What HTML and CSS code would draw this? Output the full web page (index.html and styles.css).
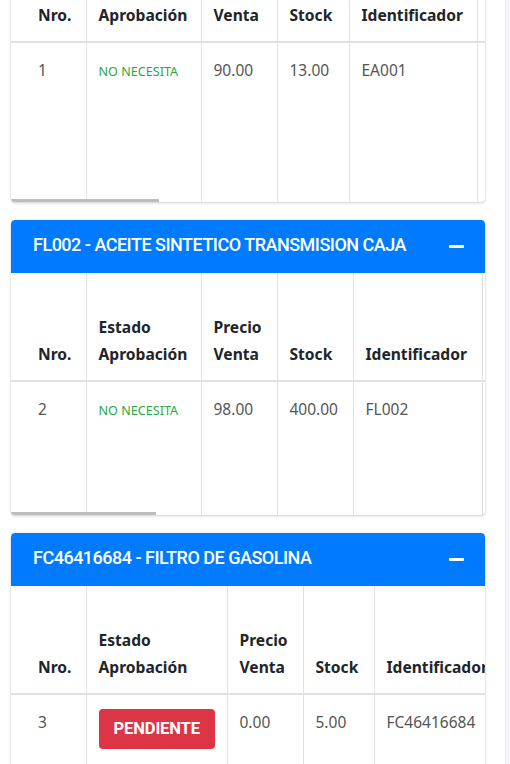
FILE: index.html
```html
<!DOCTYPE html>
<html lang="es">
<head>
<meta charset="utf-8">
<title>Productos</title>
<link rel="stylesheet" href="styles.css">
</head>
<body>
<div class="page">
  <div class="content">

    <section class="card">
      <header class="card-header">
        <h3 class="card-title">EA001 - PRODUCTO</h3>
        <span class="collapse-btn"></span>
      </header>
      <div class="table-wrap">
        <table class="grid g1">
          <thead>
            <tr>
              <th class="c-nro">Nro.</th>
              <th class="c-est">Estado Aprobación</th>
              <th class="c-pre">Precio Venta</th>
              <th class="c-stk">Stock</th>
              <th class="c-id">Identificador</th>
              <th class="c-more"></th>
            </tr>
          </thead>
          <tbody>
            <tr class="r1">
              <td class="c-nro">1</td>
              <td><span class="ok">NO NECESITA</span></td>
              <td>90.00</td>
              <td>13.00</td>
              <td>EA001</td>
              <td></td>
            </tr>
          </tbody>
        </table>
        <div class="scroll"><div class="thumb t1"></div></div>
      </div>
    </section>

    <section class="card">
      <header class="card-header">
        <h3 class="card-title">FL002 - ACEITE SINTETICO TRANSMISION CAJA</h3>
        <span class="collapse-btn"></span>
      </header>
      <div class="table-wrap">
        <table class="grid g2">
          <thead>
            <tr>
              <th class="c-nro">Nro.</th>
              <th class="c-est">Estado Aprobación</th>
              <th class="c-pre">Precio Venta</th>
              <th class="c-stk">Stock</th>
              <th class="c-id">Identificador</th>
              <th class="c-more"></th>
            </tr>
          </thead>
          <tbody>
            <tr class="r2">
              <td class="c-nro">2</td>
              <td><span class="ok">NO NECESITA</span></td>
              <td>98.00</td>
              <td>400.00</td>
              <td>FL002</td>
              <td></td>
            </tr>
          </tbody>
        </table>
        <div class="scroll"><div class="thumb t2"></div></div>
      </div>
    </section>

    <section class="card">
      <header class="card-header">
        <h3 class="card-title">FC46416684 - FILTRO DE GASOLINA</h3>
        <span class="collapse-btn"></span>
      </header>
      <div class="table-wrap">
        <table class="grid g3">
          <thead>
            <tr>
              <th class="c-nro">Nro.</th>
              <th class="c-est">Estado Aprobación</th>
              <th class="c-pre">Precio Venta</th>
              <th class="c-stk">Stock</th>
              <th class="c-id">Identificador</th>
              <th class="c-more"></th>
            </tr>
          </thead>
          <tbody>
            <tr class="r3">
              <td class="c-nro">3</td>
              <td><span class="badge-danger">PENDIENTE</span></td>
              <td>0.00</td>
              <td>5.00</td>
              <td>FC46416684</td>
              <td></td>
            </tr>
          </tbody>
        </table>
      </div>
    </section>

  </div>
</div>
</body>
</html>
```
FILE: styles.css
```css
* { box-sizing: border-box; }
html, body { margin: 0; padding: 0; }
body {
  background: #f4f6f9;
  font-family: "Noto Sans", "Open Sans", sans-serif;
  color: #212529;
  overflow: hidden;
}
.page {
  width: 506px;
  height: 764px;
  background: #fff;
  border-right: 1px solid #eceef2;
  overflow: hidden;
}
.content {
  padding: 0 20px 0 11px;
  margin-top: -119px;
}
.card {
  background: #fff;
  border-radius: 4px;
  box-shadow: 0 0 1px rgba(0,0,0,.2), 0 1px 3px rgba(0,0,0,.18);
  margin-bottom: 18px;
  overflow: hidden;
}
.card-header {
  height: 53px;
  background: #007bff;
  color: #fff;
  display: flex;
  align-items: center;
  justify-content: space-between;
  padding: 0 21px 0 22px;
  border-radius: 4px 4px 0 0;
}
.card-title {
  margin: 0;
  font-family: Roboto, "Liberation Sans", sans-serif;
  font-weight: 500;
  font-size: 18px;
  letter-spacing: -0.5px;
  line-height: 1;
  padding-bottom: 3px;
}
.collapse-btn {
  width: 15px;
  height: 3px;
  background: #fff;
  border-radius: 1px;
}
.table-wrap {
  overflow: hidden;
  position: relative;
}
.grid {
  border-collapse: collapse;
  table-layout: fixed;
  width: 900px;
  font-size: 15.5px;
}
.grid th, .grid td {
  border: 1px solid #dee2e6;
  padding: 0 12px;
  text-align: left;
}
.grid tr > :first-child { border-left: 0; }
.grid thead th {
  vertical-align: bottom;
  font-weight: 700;
  font-size: 15.6px;
  line-height: 26.5px;
  padding-bottom: 13px;
  border-top: 0;
  border-bottom: 2px solid #dee2e6;
  color: #212529;
}
.grid thead tr { height: 108px; }
.grid td {
  vertical-align: top;
  color: #555;
  line-height: 26px;
  padding-top: 14px;
  border-bottom: 0;
}
.grid .c-nro { padding-left: 27px; }

.g1 .c-nro, .g2 .c-nro, .g3 .c-nro { width: 75px; }
.g1 .c-est, .g2 .c-est { width: 115px; }
.g3 .c-est { width: 141px; }
.g1 .c-pre, .g2 .c-pre, .g3 .c-pre { width: 76px; }
.g1 .c-stk { width: 72px; }
.g3 .c-stk { width: 71px; }
.g2 .c-stk { width: 76px; }
.g1 .c-id { width: 128px; }
.g2 .c-id { width: 129px; }
.g3 .c-id { width: 140px; }

.r1 { height: 160px; }
.r2 { height: 134px; }
.r3 { height: 130px; }

.ok {
  color: #28a745;
  font-size: 12.6px;
}
.badge-danger {
  display: inline-block;
  background: #dc3545;
  color: #fff;
  font-family: Roboto, "Liberation Sans", sans-serif;
  font-weight: 700;
  font-size: 16.5px;
  letter-spacing: -0.1px;
  line-height: 40px;
  height: 40px;
  padding: 0 15px;
  border-radius: 4px;
}
.scroll {
  height: 3px;
  background: transparent;
  margin-top: -3px;
  position: relative;
}
.thumb {
  height: 3px;
  background: #bdbdbd;
}
.t1 { width: 148px; }
.t2 { width: 145px; }
```
